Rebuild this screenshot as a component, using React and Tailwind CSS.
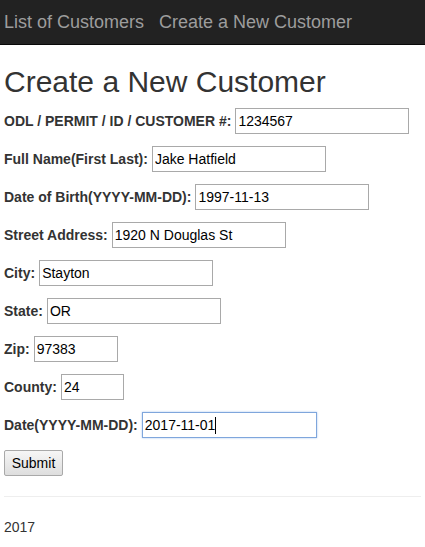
const FIELDS = [
  { label: 'ODL / PERMIT / ID / CUSTOMER #:', value: '1234567', w: 'w-[174px]' },
  { label: 'Full Name(First Last):', value: 'Jake Hatfield', w: 'w-[174px]' },
  { label: 'Date of Birth(YYYY-MM-DD):', value: '1997-11-13', w: 'w-[174px]' },
  { label: 'Street Address:', value: '1920 N Douglas St', w: 'w-[174px]' },
  { label: 'City:', value: 'Stayton', w: 'w-[174px]' },
  { label: 'State:', value: 'OR', w: 'w-[174px]' },
  { label: 'Zip:', value: '97383', w: 'w-[84px]' },
  { label: 'County:', value: '24', w: 'w-[63px]' },
]

export default function App() {
  return (
    <div className="min-h-[547px] bg-white text-[14px] text-[#333]" style={{ fontFamily: '"Liberation Sans", Arial, sans-serif' }}>
      {/* Navbar */}
      <div className="h-[45px] bg-[#222] border-b border-[#080808] flex items-center px-1 gap-[15px]">
        <a className="text-[18px] text-[#9d9d9d]">List of Customers</a>
        <a className="text-[18px] text-[#9d9d9d]">Create a New Customer</a>
      </div>

      <div className="px-1">
        <h1 className="text-[30px] leading-[33px] mt-[20px] mb-[10px] text-[#333]">Create a New Customer</h1>

        <form className="flex flex-col gap-3" onSubmit={e => e.preventDefault()}>
          {FIELDS.map(f => (
            <div key={f.label} className="flex items-center h-[26px]">
              <label className="font-bold mr-1">{f.label}</label>
              <input
                defaultValue={f.value}
                className={`${f.w} h-[26px] border border-[#a9a9a9] px-[2px] text-[14px] text-black outline-none`}
              />
            </div>
          ))}
          <div className="flex items-center h-[26px]">
            <label className="font-bold mr-1">Date(YYYY-MM-DD):</label>
            <div className="w-[175px] h-[26px] border border-[#7fa6dc] shadow-[0_0_2px_#a8c6f0] px-[2px] flex items-center text-[14px] text-black">
              2017-11-01<span className="inline-block w-px h-[17px] bg-black" />
            </div>
          </div>
          <div>
            <button type="submit" className="w-[59px] h-[26px] border border-[#a9a9a9] rounded-[2px] bg-gradient-to-b from-[#f6f6f6] to-[#dedede] text-[14px] text-black">
              Submit
            </button>
          </div>
        </form>

        <hr className="mt-5 border-t border-[#eee]" />
        <footer className="mt-[20px]">
          <p>2017</p>
        </footer>
      </div>
    </div>
  )
}
